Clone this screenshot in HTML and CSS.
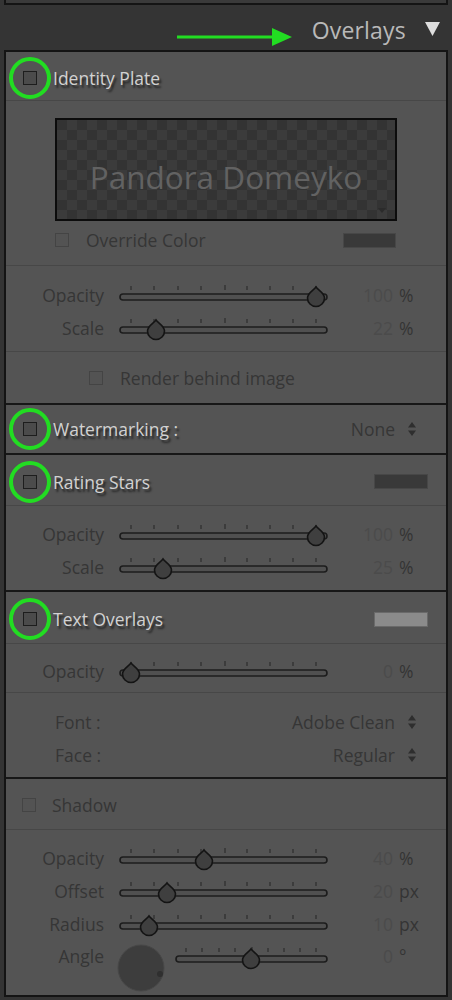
FILE: index.html
```html
<!DOCTYPE html>
<html>
<head>
<meta charset="utf-8">
<link rel="stylesheet" href="styles.css">
</head>
<body>
<div class="prev"></div>
<div class="topbar">
  <svg class="arrow" width="116" height="20" viewBox="0 0 116 20"><path d="M0 8.5 H95 V1 L115 10 L95 19 V11.5 H0 Z" fill="#22dd22"/></svg>
  <span class="title">Overlays</span>
  <svg class="tri" width="15" height="15" viewBox="0 0 15 15"><path d="M0 1 H15 L7.5 15 Z" fill="#dedede"/></svg>
</div>

<div class="panel">
  <section class="sec">
    <div class="hdr h49 bline"><span class="cbwrap"><span class="cb"></span><span class="ring"></span></span><span class="htext">Identity Plate</span></div>
    <div class="plate-area">
      <div class="plate"><span class="plate-text">Pandora Domeyko</span><svg class="plate-dd" width="8" height="5" viewBox="0 0 8 5"><path d="M0 0H8L4 5Z" fill="#2b2b2b"/></svg></div>
      <div class="override"><span class="cb light"></span><span class="dim olabel">Override Color</span><span class="swatch darksw osw"></span></div>
    </div>
    <div class="sliders s1">
      <div class="srow"><span class="slabel">Opacity</span><svg class="sl" width="212" height="26" viewBox="0 0 212 26"><rect x="2" y="12" width="207" height="6" rx="3" class="trk"/><path class="tk" d="M13 4v4M36 4v4M60 4v4M83 4v4M107 3v5M129 4v4M152 4v4M175 4v4M198 4v4"/><path class="knob" transform="translate(198 16)" d="M0 -11C2 -8 8.5 -5 8.5 0A8.5 8.5 0 0 1 -8.5 0C-8.5 -5 -2 -8 0 -11Z"/></svg><span class="val">100</span><span class="unit">%</span></div>
      <div class="srow"><span class="slabel">Scale</span><svg class="sl" width="212" height="26" viewBox="0 0 212 26"><rect x="2" y="12" width="207" height="6" rx="3" class="trk"/><path class="tk" d="M13 4v4M36 4v4M60 4v4M83 4v4M107 3v5M129 4v4M152 4v4M175 4v4M198 4v4"/><path class="knob" transform="translate(38 16)" d="M0 -11C2 -8 8.5 -5 8.5 0A8.5 8.5 0 0 1 -8.5 0C-8.5 -5 -2 -8 0 -11Z"/></svg><span class="val">22</span><span class="unit">%</span></div>
    </div>
    <div class="render"><span class="cb light"></span><span class="dim rlabel">Render behind image</span></div>
  </section>

  <section class="sec">
    <div class="hdr h48"><span class="cbwrap"><span class="cb"></span><span class="ring"></span></span><span class="htext">Watermarking :</span><span class="spacer"></span><span class="dim">None</span><svg class="ud" width="8" height="14" viewBox="0 0 8 14"><path d="M0 5.5L4 0L8 5.5ZM0 8.5H8L4 14Z" fill="#2e2e2e"/></svg></div>
  </section>

  <section class="sec">
    <div class="hdr h51 bline"><span class="cbwrap"><span class="cb"></span><span class="ring"></span></span><span class="htext">Rating Stars</span><span class="spacer"></span><span class="swatch darksw hsw"></span></div>
    <div class="sliders s3">
      <div class="srow"><span class="slabel">Opacity</span><svg class="sl" width="212" height="26" viewBox="0 0 212 26"><rect x="2" y="12" width="207" height="6" rx="3" class="trk"/><path class="tk" d="M13 4v4M36 4v4M60 4v4M83 4v4M107 3v5M129 4v4M152 4v4M175 4v4M198 4v4"/><path class="knob" transform="translate(198 16)" d="M0 -11C2 -8 8.5 -5 8.5 0A8.5 8.5 0 0 1 -8.5 0C-8.5 -5 -2 -8 0 -11Z"/></svg><span class="val">100</span><span class="unit">%</span></div>
      <div class="srow"><span class="slabel">Scale</span><svg class="sl" width="212" height="26" viewBox="0 0 212 26"><rect x="2" y="12" width="207" height="6" rx="3" class="trk"/><path class="tk" d="M13 4v4M36 4v4M60 4v4M83 4v4M107 3v5M129 4v4M152 4v4M175 4v4M198 4v4"/><path class="knob" transform="translate(45 16)" d="M0 -11C2 -8 8.5 -5 8.5 0A8.5 8.5 0 0 1 -8.5 0C-8.5 -5 -2 -8 0 -11Z"/></svg><span class="val">25</span><span class="unit">%</span></div>
    </div>
  </section>

  <section class="sec">
    <div class="hdr h52 bline"><span class="cbwrap"><span class="cb"></span><span class="ring"></span></span><span class="htext">Text Overlays</span><span class="spacer"></span><span class="swatch lightsw hsw"></span></div>
    <div class="sliders s4 bline">
      <div class="srow"><span class="slabel">Opacity</span><svg class="sl" width="212" height="26" viewBox="0 0 212 26"><rect x="2" y="12" width="207" height="6" rx="3" class="trk"/><path class="tk" d="M13 4v4M36 4v4M60 4v4M83 4v4M107 3v5M129 4v4M152 4v4M175 4v4M198 4v4"/><path class="knob" transform="translate(13 16)" d="M0 -11C2 -8 8.5 -5 8.5 0A8.5 8.5 0 0 1 -8.5 0C-8.5 -5 -2 -8 0 -11Z"/></svg><span class="val">0</span><span class="unit">%</span></div>
    </div>
    <div class="fontblock">
      <div class="frow"><span class="dim">Font :</span><span class="spacer"></span><span class="dim">Adobe Clean</span><svg class="ud" width="8" height="14" viewBox="0 0 8 14"><path d="M0 5.5L4 0L8 5.5ZM0 8.5H8L4 14Z" fill="#2e2e2e"/></svg></div>
      <div class="frow"><span class="dim">Face :</span><span class="spacer"></span><span class="dim">Regular</span><svg class="ud" width="8" height="14" viewBox="0 0 8 14"><path d="M0 5.5L4 0L8 5.5ZM0 8.5H8L4 14Z" fill="#2e2e2e"/></svg></div>
    </div>
  </section>

  <section class="sec last">
    <div class="shadowrow bline"><span class="cb light"></span><span class="dim slab2">Shadow</span></div>
    <div class="sliders s5">
      <div class="srow"><span class="slabel">Opacity</span><svg class="sl" width="212" height="26" viewBox="0 0 212 26"><rect x="2" y="12" width="207" height="6" rx="3" class="trk"/><path class="tk" d="M13 4v4M36 4v4M60 4v4M83 4v4M107 3v5M129 4v4M152 4v4M175 4v4M198 4v4"/><path class="knob" transform="translate(86 16)" d="M0 -11C2 -8 8.5 -5 8.5 0A8.5 8.5 0 0 1 -8.5 0C-8.5 -5 -2 -8 0 -11Z"/></svg><span class="val">40</span><span class="unit">%</span></div>
      <div class="srow"><span class="slabel">Offset</span><svg class="sl" width="212" height="26" viewBox="0 0 212 26"><rect x="2" y="12" width="207" height="6" rx="3" class="trk"/><path class="tk" d="M13 4v4M36 4v4M60 4v4M83 4v4M107 3v5M129 4v4M152 4v4M175 4v4M198 4v4"/><path class="knob" transform="translate(49 16)" d="M0 -11C2 -8 8.5 -5 8.5 0A8.5 8.5 0 0 1 -8.5 0C-8.5 -5 -2 -8 0 -11Z"/></svg><span class="val">20</span><span class="unit">px</span></div>
      <div class="srow"><span class="slabel">Radius</span><svg class="sl" width="212" height="26" viewBox="0 0 212 26"><rect x="2" y="12" width="207" height="6" rx="3" class="trk"/><path class="tk" d="M13 4v4M36 4v4M60 4v4M83 4v4M107 3v5M129 4v4M152 4v4M175 4v4M198 4v4"/><path class="knob" transform="translate(31 16)" d="M0 -11C2 -8 8.5 -5 8.5 0A8.5 8.5 0 0 1 -8.5 0C-8.5 -5 -2 -8 0 -11Z"/></svg><span class="val">10</span><span class="unit">px</span></div>
      <div class="srow angle"><span class="slabel">Angle</span><span class="anglebox"><svg class="dial" width="48" height="48" viewBox="0 0 48 48"><circle cx="24" cy="24" r="23" fill="#3d3d3d" stroke="#474747" stroke-width="1"/><circle cx="43" cy="30" r="3" fill="#2f2f2f"/></svg><svg class="sl2" width="156" height="26" viewBox="0 0 156 26"><rect x="2" y="12" width="151" height="6" rx="3" class="trk"/><path class="tk" d="M12 4v4M28 4v4M45 4v4M61 4v4M78 3v5M94 4v4M110 4v4M126 4v4M142 4v4"/><path class="knob" transform="translate(77 16)" d="M0 -11C2 -8 8.5 -5 8.5 0A8.5 8.5 0 0 1 -8.5 0C-8.5 -5 -2 -8 0 -11Z"/></svg></span><span class="val">0</span><span class="unit">°</span></div>
    </div>
  </section>
</div>
</body>
</html>
```
FILE: styles.css
```css
* { box-sizing: border-box; }
html, body { margin: 0; padding: 0; }
body {
  background: #343434;
  font-family: "Open Sans", "Liberation Sans", sans-serif;
  width: 452px;
  height: 1000px;
  overflow: hidden;
}
.prev {
  height: 5px;
  margin: 0 4px;
  background: #3a3a3a;
  border: 2px solid #141414;
  border-top: none;
}
.topbar {
  position: relative;
  height: 45px;
  display: flex;
  align-items: center;
  justify-content: flex-end;
  padding: 4px 12px 0 0;
}
.arrow { position: absolute; left: 177px; top: 22px; }
.title {
  color: #b9b9b9;
  font-size: 23px;
  letter-spacing: 0.2px;
  margin-right: 19px;
}
.tri { margin-top: -2px; }
.panel {
  margin: 0 4px;
  border: 2px solid #141414;
  background: #545454;
}
.sec { border-bottom: 2px solid #171717; }
.sec.last { border-bottom: none; }
.bline { border-bottom: 1px solid #474747; }
.hdr {
  display: flex;
  align-items: center;
  padding: 0 18px 0 17px;
}
.h48 { height: 48px; }
.h49 { height: 49px; padding-top: 3px; }
.h51 { height: 51px; padding-top: 3px; }
.h52 { height: 52px; padding-top: 3px; }
.cbwrap { position: relative; width: 14px; height: 14px; flex: none; }
.cb {
  display: block;
  width: 14px;
  height: 14px;
  flex: none;
  border: 1.5px solid #1d1d1d;
  background: #4b4b4b;
}
.cb.light { border: 1.5px solid #444; background: #535353; }
.ring {
  position: absolute;
  left: -14px;
  top: -14px;
  width: 42px;
  height: 42px;
  border: 4px solid #22dd22;
  border-radius: 50%;
}
.htext {
  margin-left: 16px;
  color: #d2d2d2;
  font-size: 17.5px;
  text-shadow: 2px 3px 2px rgba(20, 20, 20, 0.75);
}
.spacer { flex: 1; }
.dim { color: #363636; font-size: 17.5px; }
.ud { flex: none; margin-left: 13px; margin-right: 12px; }
.swatch { display: block; width: 54px; height: 15px; flex: none; }
.darksw { background: #393939; border: 1px solid #474747; }
.lightsw { background: #8b8b8b; border: 1px solid #6a6a6a; }

.plate-area { padding: 17px 0 10px 49px; border-bottom: 1px solid #474747; }
.plate {
  position: relative;
  width: 342px;
  height: 103px;
  border: 2px solid #0c0c0c;
  background: repeating-conic-gradient(#3b3b3b 0 25%, #333333 0 50%) 0 0 / 20px 20px;
  display: flex;
  align-items: center;
  justify-content: center;
}
.plate-text { color: #626262; font-size: 31.5px; margin-top: 14px; }
.plate-dd { position: absolute; right: 9px; bottom: 6px; }
.override {
  display: flex;
  align-items: center;
  width: 342px;
  height: 30px;
  margin-top: 4px;
}
.olabel { margin-left: 17px; }
.osw { margin-left: auto; margin-right: 1px; width: 53px; }

.sliders { border-bottom: 1px solid #474747; }
.sec .sliders:last-child { border-bottom: none; }
.s1 { padding: 12px 0 7px; }
.s3 { padding: 11px 0 7px; }
.s4 { padding: 10px 0 5px; }
.s5 { padding: 11px 0 22px; }
.srow { display: flex; align-items: center; height: 33px; }
.slabel {
  width: 98px;
  flex: none;
  text-align: right;
  color: #363636;
  font-size: 17.5px;
}
.sl { margin-left: 14px; flex: none; display: block; }
.trk { fill: #505050; stroke: #1c1c1c; stroke-width: 1.6; }
.tk { stroke: #2d2d2d; stroke-width: 1.2; }
.knob { fill: #3f3f3f; stroke: #141414; stroke-width: 1.6; }
.val {
  width: 63px;
  flex: none;
  text-align: right;
  color: #4b4b4b;
  font-size: 17.5px;
}
.unit { margin-left: 6px; color: #343434; font-size: 17.5px; }
.angle { align-items: flex-start; }
.angle .slabel, .angle .val, .angle .unit { line-height: 33px; }
.anglebox { display: flex; margin-left: 13px; width: 213px; flex: none; }
.dial { flex: none; margin-top: 4px; }
.sl2 { flex: none; margin-left: 9px; margin-top: 4px; display: block; }

.render {
  height: 51px;
  display: flex;
  align-items: center;
  padding-left: 83px;
}
.rlabel { margin-left: 17px; }
.fontblock { padding: 12px 0 6px 49px; }
.frow { display: flex; align-items: center; height: 33px; padding-right: 18px; }
.shadowrow {
  height: 51px;
  display: flex;
  align-items: center;
  padding: 1px 0 0 16px;
}
.slab2 { margin-left: 16px; }
```
